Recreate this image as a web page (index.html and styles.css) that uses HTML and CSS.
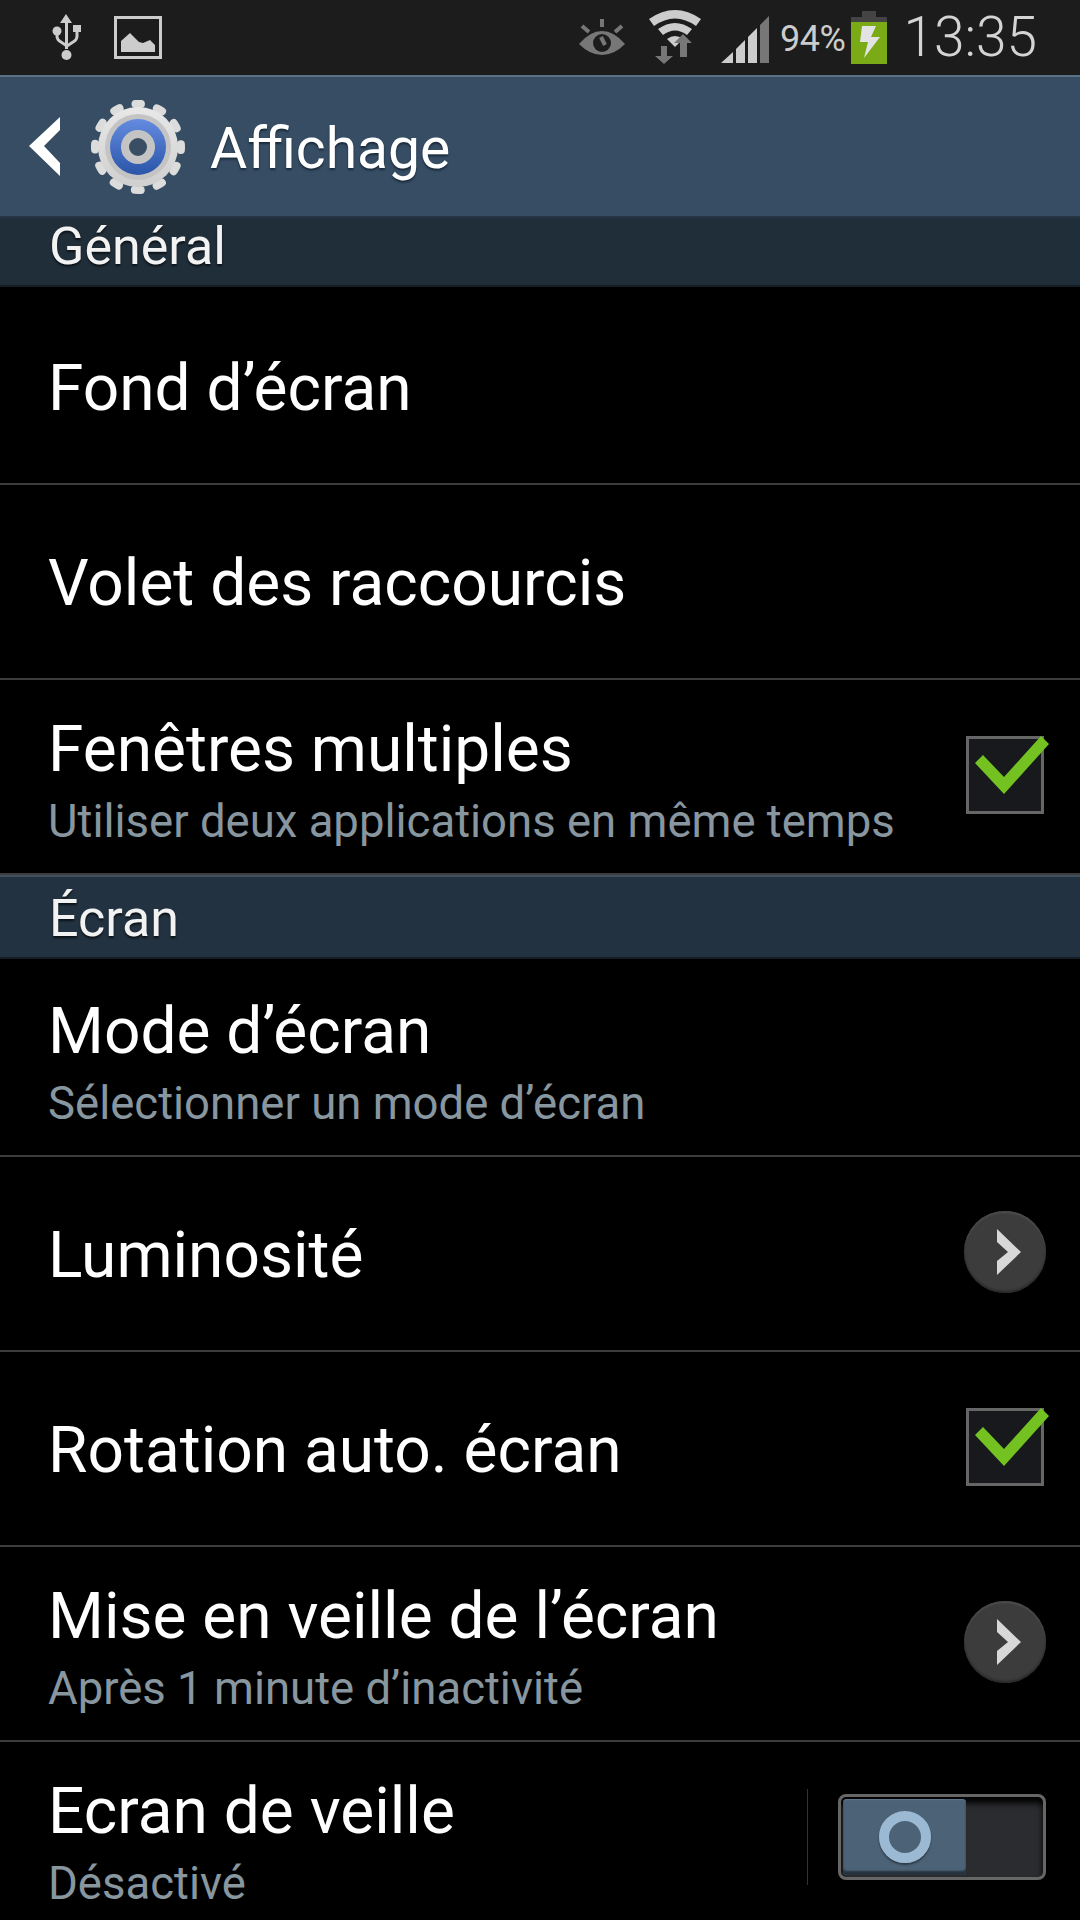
FILE: index.html
```html
<!DOCTYPE html>
<html lang="fr">
<head>
  <meta charset="UTF-8">
  <meta name="viewport" content="width=device-width, initial-scale=1.0">
  <title>Affichage</title>
  <link rel="stylesheet" href="styles.css">
</head>
<body>
  <div class="status-bar">
    <div class="status-left">
      <svg class="icon-usb" width="30" height="46" viewBox="0 0 30 46">
        <path d="M14 0l6 9h-4v26h-3V9H8z" fill="#ccc"/>
        <path d="M5 18v4q0 4 4 6l6 4 6-4q4-2 4-6v-6" fill="none" stroke="#ccc" stroke-width="3"/>
        <circle cx="5" cy="17" r="4.5" fill="#ccc"/>
        <rect x="21" y="11" width="8" height="7" fill="#ccc"/>
        <circle cx="14.5" cy="41" r="5" fill="#ccc"/>
      </svg>
      <svg class="icon-image" width="48" height="43" viewBox="0 0 48 43">
        <rect x="1.5" y="1.5" width="45" height="40" fill="none" stroke="#ccc" stroke-width="3"/>
        <path d="M7 36V25l9-8 9 9 4 1 7-3 5 5v7z" fill="#ccc"/>
      </svg>
    </div>
    <div class="status-right">
      <svg class="icon-eye" width="46" height="36" viewBox="0 0 46 36">
        <path d="M0 25Q11 12 23 12T46 25Q35 36 23 36T0 25z" fill="#777"/>
        <circle cx="23" cy="24" r="9" fill="#1c1c1c"/>
        <path d="M22 18l4 8" stroke="#777" stroke-width="4"/>
        <path d="M23 0v8M3 7l7 6M43 7l-7 6" stroke="#777" stroke-width="4"/>
      </svg>
      <svg class="icon-wifi" width="52" height="54" viewBox="0 0 52 54">
        <path d="M0 9Q26-9 52 9l-5 7Q26 1 5 16z" fill="#ccc"/>
        <path d="M9 19Q26 7 43 19l-5 6Q26 16 14 25z" fill="#ccc"/>
        <path d="M18 29Q26 23 34 29l-8 8z" fill="#ccc"/>
        <path d="M12 36h6v10h6l-9 8-9-8h6z" fill="#777"/>
        <path d="M34 24l9 9h-5v14h-7V33h-6z" fill="#777"/>
      </svg>
      <svg class="icon-signal" width="49" height="48" viewBox="0 0 49 48">
        <path d="M0 47L12 36v11z" fill="#ccc"/>
        <path d="M15 33L24 24v23h-9z" fill="#ccc"/>
        <path d="M27 21l9-9v35h-9z" fill="#ccc"/>
        <path d="M39 9l9-9v47h-9z" fill="#777"/>
      </svg>
      <span class="battery-level">94%</span>
      <svg class="icon-battery" width="36" height="53" viewBox="0 0 36 53">
        <rect x="11" y="0" width="14" height="6" fill="#444"/>
        <rect x="0" y="6" width="36" height="5" fill="#444"/>
        <rect x="0" y="11" width="36" height="42" fill="#7aab17"/>
        <path d="M11 15h14l-5 11h9L13 47l4-16H9z" fill="#e3e3e3"/>
      </svg>
      <span class="clock">13:35</span>
    </div>
  </div>

  <div class="action-bar">
    <svg class="icon-back" width="32" height="60" viewBox="0 0 32 60">
      <path d="M31 0v13L15 29l16 17v13L0 29z" fill="#fff"/>
    </svg>
    <svg class="icon-gear" width="94" height="94" viewBox="0 0 94 94">
      <defs>
        <linearGradient id="gearFill" x1="0" y1="0" x2="0" y2="1">
          <stop offset="0" stop-color="#e8e8e8"/>
          <stop offset="1" stop-color="#cfcfcf"/>
        </linearGradient>
        <linearGradient id="gearBlue" x1="0" y1="0" x2="0" y2="1">
          <stop offset="0" stop-color="#648be0"/>
          <stop offset="1" stop-color="#2a55a8"/>
        </linearGradient>
      </defs>
      <circle cx="47" cy="47" r="43" fill="none" stroke="#dcdcdc" stroke-width="8" stroke-linecap="round" stroke-dasharray="6 16.515" stroke-dashoffset="3" transform="rotate(-90 47 47)"/>
      <circle cx="47" cy="47" r="40" fill="url(#gearFill)"/>
      <circle cx="47" cy="47" r="33" fill="#c4c4c4"/>
      <circle cx="47" cy="47" r="28" fill="url(#gearBlue)"/>
      <circle cx="47" cy="47" r="13" fill="#3a4e63" stroke="#c4c4c4" stroke-width="8"/>
    </svg>
    <span class="action-title">Affichage</span>
  </div>

  <div class="section first">Général</div>
  <div class="row row-top"><div class="row-text"><div class="row-title">Fond d’écran</div></div></div>
  <div class="row"><div class="row-text"><div class="row-title">Volet des raccourcis</div></div></div>
  <div class="row">
    <div class="row-text">
      <div class="row-title">Fenêtres multiples</div>
      <div class="row-sub">Utiliser deux applications en même temps</div>
    </div>
    <span class="check">
      <svg class="check-mark" width="76" height="60" viewBox="0 0 76 60"><path d="M1 27l8-8 21 22L67 0l8 8-45 50z" fill="#74c122"/></svg>
    </span>
  </div>

  <div class="section">Écran</div>
  <div class="row row-top">
    <div class="row-text">
      <div class="row-title">Mode d’écran</div>
      <div class="row-sub">Sélectionner un mode d’écran</div>
    </div>
  </div>
  <div class="row">
    <div class="row-text"><div class="row-title">Luminosité</div></div>
    <span class="arrow">
      <svg width="24" height="46" viewBox="0 0 24 46"><path d="M0 0l24 23L0 46V32l11-9L0 13z" fill="#d8d8d8"/></svg>
    </span>
  </div>
  <div class="row">
    <div class="row-text"><div class="row-title">Rotation auto. écran</div></div>
    <span class="check">
      <svg class="check-mark" width="76" height="60" viewBox="0 0 76 60"><path d="M1 27l8-8 21 22L67 0l8 8-45 50z" fill="#74c122"/></svg>
    </span>
  </div>
  <div class="row">
    <div class="row-text">
      <div class="row-title">Mise en veille de l’écran</div>
      <div class="row-sub">Après 1 minute d’inactivité</div>
    </div>
    <span class="arrow">
      <svg width="24" height="46" viewBox="0 0 24 46"><path d="M0 0l24 23L0 46V32l11-9L0 13z" fill="#d8d8d8"/></svg>
    </span>
  </div>
  <div class="row">
    <div class="row-text">
      <div class="row-title">Ecran de veille</div>
      <div class="row-sub">Désactivé</div>
    </div>
    <span class="row-sep"></span>
    <span class="switch">
      <span class="switch-thumb"><span class="switch-ring"></span></span>
    </span>
  </div>
</body>
</html>
```

FILE: styles.css
```css
* {
  box-sizing: border-box;
}
html, body {
  height: 1920px;
}
body {
  margin: 0;
  background-color: #000;
  color: #fff;
  font-family: Roboto, "Noto Sans", sans-serif;
  overflow: hidden;
}
.status-bar {
  height: 75px;
  background-color: #1c1c1c;
  display: flex;
  justify-content: space-between;
  align-items: flex-start;
}
.status-left {
  display: flex;
  padding-left: 52px;
}
.icon-usb {
  margin-top: 14px;
}
.icon-image {
  margin: 16px 0 0 32px;
}
.status-right {
  display: flex;
  align-items: flex-start;
  padding-right: 43px;
}
.icon-eye {
  margin: 19px 0 0 0;
}
.icon-wifi {
  margin: 10px 0 0 24px;
}
.icon-signal {
  margin: 16px 0 0 20px;
}
.battery-level {
  margin: 18px 0 0 10px;
  font-size: 36px;
  line-height: 42px;
  color: #ccc;
  letter-spacing: -0.5px;
}
.icon-battery {
  margin: 11px 0 0 6px;
}
.clock {
  margin: 6px 0 0 16px;
  font-size: 55px;
  line-height: 63px;
  font-weight: 300;
  color: #d4d4d4;
}
.action-bar {
  height: 143px;
  background-color: #364d64;
  border-top: 2px solid #5a7186;
  border-bottom: 2px solid #253544;
  display: flex;
  align-items: center;
  padding-left: 29px;
}
.icon-gear {
  margin-left: 30px;
}
.action-title {
  margin: 4px 0 0 25px;
  font-size: 57px;
  text-shadow: 0 2px 2px #1a2a3a;
}
.section {
  height: 84px;
  background-color: #233240;
  border-top: 2px solid #3f4f5c;
  border-bottom: 2px solid #151e26;
  padding-left: 49px;
  font-size: 52px;
  line-height: 84px;
  color: #f2f2f2;
  text-shadow: 0 2px 2px #0c1218;
}
.section.first {
  height: 69px;
  border-top: none;
  line-height: 58px;
  background-color: #202e3a;
}
.row {
  height: 195px;
  border-bottom: 2px solid #3c3c3c;
  display: flex;
  align-items: center;
  padding: 0 34px 4px 48px;
}
.row-top {
  height: 198px;
  padding-bottom: 0;
}
.row-text {
  flex: 1;
  padding-top: 8px;
}
.row-title {
  font-size: 64px;
  line-height: 74px;
}
.row-sub {
  margin: 7px 0 -5px;
  font-size: 45.5px;
  line-height: 56px;
  color: #87969f;
}
.check {
  position: relative;
  width: 78px;
  height: 78px;
  margin: 0 2px 0 0;
  background-color: #17191c;
  border: 3px solid #666;
}
.check-mark {
  position: absolute;
  top: -3px;
  right: -9px;
}
.arrow {
  width: 82px;
  height: 82px;
  border-radius: 50%;
  background-color: #3c3c3c;
  box-shadow: inset 0 -2px 2px #2a2a2a, inset 0 2px 2px #4c4c4c;
  display: flex;
  align-items: center;
  justify-content: center;
  padding-left: 8px;
}
.row-sep {
  width: 1px;
  height: 96px;
  margin-right: 30px;
  background-color: #333;
}
.switch {
  width: 208px;
  height: 86px;
  border: 3px solid #666;
  border-radius: 8px;
  background-color: #2b2c30;
  box-shadow: inset 0 6px 6px #000;
  padding: 2px;
}
.switch-thumb {
  width: 123px;
  height: 76px;
  display: flex;
  align-items: center;
  justify-content: center;
  background-color: #4c6377;
  border-radius: 4px;
  box-shadow: inset 0 -4px 2px #26323e, inset 0 1px 1px #5f778c;
}
.switch-ring {
  width: 52px;
  height: 52px;
  border-radius: 50%;
  border: 10px solid #9bb9d3;
  box-shadow: 0 2px 2px #2d3a46;
}
```
